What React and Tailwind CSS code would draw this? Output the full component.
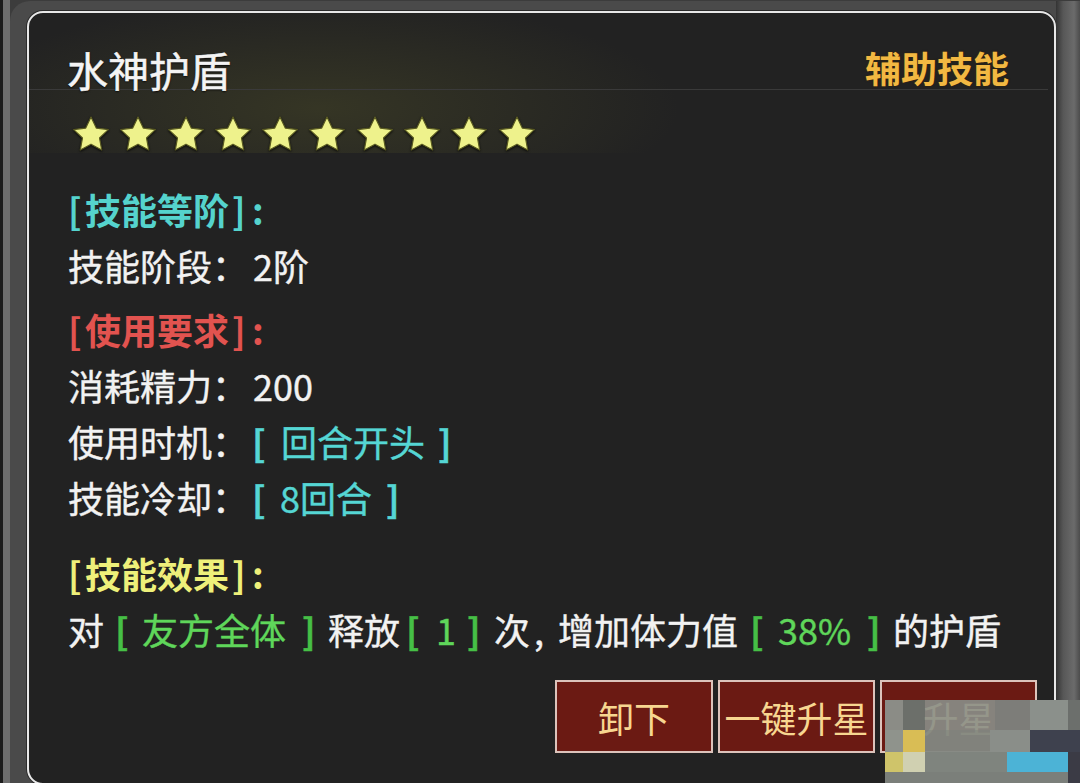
import React from "react";

const Star = () => (
  <svg viewBox="1.4 1.2 21.2 21.2" className="w-[36px] h-[36px] shrink-0 [filter:drop-shadow(0_1px_1px_rgba(0,0,0,0.8))]">
    <polygon
      points="12,1.8 15.1,8.3 22.2,9.2 17,14.1 18.3,21.2 12,17.8 5.7,21.2 7,14.1 1.8,9.2 8.9,8.3"
      fill="#eef28c"
      stroke="#5a5b22"
      strokeWidth="0.7"
      strokeLinejoin="round"
    />
  </svg>
);

const B = ({ w, p, c, children }) => (
  <span className={`inline-block ${w} ${p} ${c}`}>{children}</span>
);

const mosaicRows = [
  { h: "h-[30px]", cells: [["w-[18px]", "bg-[#8d928c]/95"], ["w-[22px]", "bg-[#6d746f]/95"], ["w-[70px]", "bg-[#8a8f89]/90"], ["w-[35px]", "bg-[#7e837e]/95"], ["w-[38px]", "bg-[#8b908b]"], ["w-[12px]", "bg-[#6c6f6c]"]] },
  { h: "h-[22px]", cells: [["w-[18px]", "bg-[#8f938c]"], ["w-[22px]", "bg-[#d9bd55]"], ["w-[65px]", "bg-[#838882]/95"], ["w-[40px]", "bg-[#8a8e89]"], ["w-[50px]", "bg-[#3e414e]"]] },
  { h: "h-[20px]", cells: [["w-[18px]", "bg-[#cfc46a]"], ["w-[22px]", "bg-[#d0d0b1]"], ["w-[82px]", "bg-[#7f847e]"], ["w-[61px]", "bg-[#4cb3d6]"], ["w-[12px]", "bg-[#3b3b45]"]] },
  { h: "h-[11px]", cells: [["w-[183px]", "bg-[#7b7f7a]"], ["w-[12px]", "bg-[#3b3b45]"]] },
];

export default function App() {
  return (
    <div className="w-[1080px] h-[783px] overflow-hidden relative flex bg-[#3c3c3c] font-['Noto_Sans_CJK_SC','Noto_Sans',sans-serif] text-[#f2f2f2]">
      {/* left frame strips */}
      <div className="w-[3px] shrink-0 bg-[#1c1c1c]" />
      <div className="w-[7px] shrink-0 bg-[#6e6e6e]" />
      <div className="flex-1 flex rounded-tl-[20px] rounded-tr-[20px] bg-[#4a4a4a] mt-[1px]">
        <div className="w-[17px] shrink-0" />
        {/* panel */}
        <div className="mt-[10px] h-[774px] w-[1029px] shrink-0 border-2 border-[#e8e8e8] rounded-[16px] bg-[#222222] flex flex-col shadow-[0_0_0_1px_#2c2c2c] overflow-hidden">
          <div className="bg-[radial-gradient(ellipse_360px_110px_at_290px_95px,rgba(80,80,40,0.42),transparent)]">
            {/* header */}
            <div className="flex justify-between items-start pt-[36px] pl-[38px] pr-[39px] mr-[6px] border-b border-[#3a3a3a]">
              <div className="text-[41px] leading-[40px] text-[#f4f4f4] [-webkit-text-stroke:0.5px_#f4f4f4] [text-shadow:0_1px_2px_rgba(0,0,0,0.9)]">水神护盾</div>
              <div className="text-[36px] leading-[36px] font-bold text-[#f2b842] [text-shadow:0_0_2px_#3a2600]">辅助技能</div>
            </div>
            {/* stars */}
            <div className="flex gap-[11.3px] pl-[44px] pt-[26px] h-[63px]">
              {Array.from({ length: 10 }).map((_, i) => (
                <Star key={i} />
              ))}
            </div>
          </div>

          {/* body */}
          <div className="pl-[39px] text-[36px] leading-[56px] mt-[28px] [-webkit-text-stroke:0.4px_currentColor]">
            <div className="text-[#55d3cd] font-bold [-webkit-text-stroke:0px]">
              <B w="w-[17px]" p="" c="">[</B>技能等阶<B w="w-[23px]" p="pl-[3px]" c="">]</B>:
            </div>
            <div>
              技能阶段：<span className="ml-[5px]">2阶</span>
            </div>
            <div className="text-[#e2534f] font-bold mt-[8px] [-webkit-text-stroke:0px]">
              <B w="w-[17px]" p="" c="">[</B>使用要求<B w="w-[23px]" p="pl-[3px]" c="">]</B>:
            </div>
            <div>
              消耗精力：<span className="ml-[5px]">200</span>
            </div>
            <div>
              使用时机：
              <span className="text-[#55d6d4]">
                <B w="w-[33px]" p="pl-[4px]" c="font-bold">[</B>回合开头<B w="w-[30px]" p="pl-[13px]" c="font-bold">]</B>
              </span>
            </div>
            <div>
              技能冷却：
              <span className="text-[#55d6d4]">
                <B w="w-[32px]" p="pl-[4px]" c="font-bold">[</B>8回合<B w="w-[30px]" p="pl-[14px]" c="font-bold">]</B>
              </span>
            </div>
            <div className="text-[#eef07a] font-bold mt-[20px] [-webkit-text-stroke:0px]">
              <B w="w-[17px]" p="" c="">[</B>技能效果<B w="w-[23px]" p="pl-[3px]" c="">]</B>:
            </div>
            <div className="whitespace-nowrap">
              对
              <B w="w-[38px]" p="pl-[11px]" c="text-[#46bf46] font-bold">[</B>
              <span className="text-[#5fd65a]">友方全体</span>
              <B w="w-[42px]" p="pl-[16px]" c="text-[#46bf46] font-bold">]</B>
              释放
              <B w="w-[36px]" p="pl-[6px]" c="text-[#46bf46] font-bold">[</B>
              <span className="inline-block w-[20px] text-center text-[#5fd65a]">1</span>
              <B w="w-[38px]" p="pl-[11px]" c="text-[#46bf46] font-bold">]</B>
              次<span className="inline-block w-[28px] pl-[4px]">,</span>增加体力值
              <B w="w-[40px]" p="pl-[12px]" c="text-[#46bf46] font-bold">[</B>
              <span className="inline-block w-[72px] text-[#5fd65a]">38%</span>
              <B w="w-[43px]" p="pl-[17px]" c="text-[#46bf46] font-bold">]</B>
              的护盾
            </div>
          </div>

          {/* buttons */}
          <div className="flex justify-end gap-[5px] pr-[17px] mt-[23px]">
            <button className="w-[158px] h-[73px] border-2 border-[#dcc3bb] bg-[#6b1a13] text-[36px] leading-none text-[#f7d690]">卸下</button>
            <button className="w-[157px] h-[73px] border-2 border-[#dcc3bb] bg-[#6b1a13] text-[36px] leading-none text-[#f7d690] whitespace-nowrap">一键升星</button>
            <button className="w-[157px] h-[73px] border-2 border-[#dcc3bb] bg-[#6b1a13] text-[36px] leading-none text-[#f7d690]">升星</button>
          </div>
        </div>
        {/* right frame */}
        <div className="w-[24px] shrink-0 bg-[linear-gradient(to_right,#343434,#575757_30%,#6b6b6b_75%,#4c4c4c)]" />
      </div>

      {/* mosaic (pixelated redaction) lying over the bottom-right corner */}
      <div className="absolute left-[885px] top-[700px] w-[195px] h-[83px] flex flex-col">
        {mosaicRows.map((row, i) => (
          <div key={i} className={`flex ${row.h}`}>
            {row.cells.map(([w, bg], j) => (
              <div key={j} className={`${w} h-full ${bg}`} />
            ))}
          </div>
        ))}
      </div>
    </div>
  );
}
